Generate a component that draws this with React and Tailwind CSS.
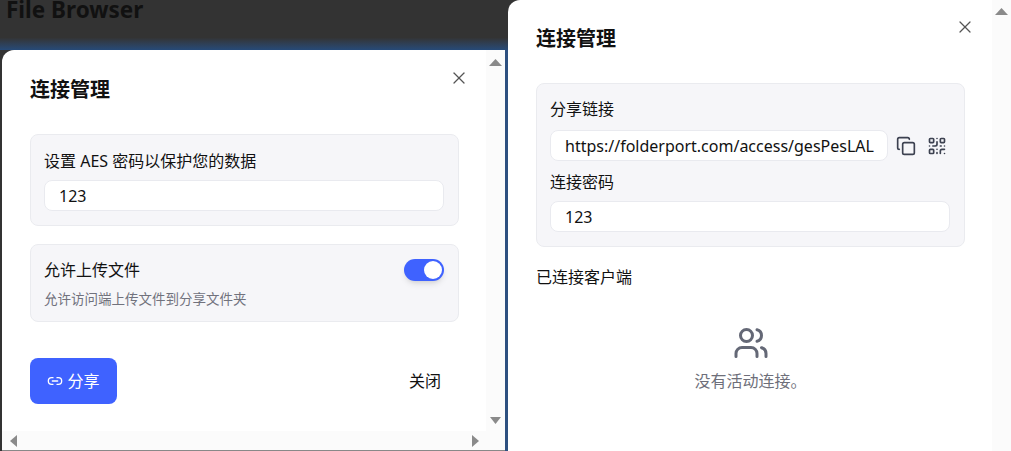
import { X, Link2, Copy, QrCode, Users } from "lucide-react";

const font = "font-['Noto_Sans','Noto_Sans_CJK_SC',sans-serif]";

function Field({ value, className = "" }) {
  return (
    <div className={`h-[31px] flex items-center px-[14px] bg-white border border-[#e9eaef] rounded-lg text-[16px] text-[#111] whitespace-nowrap ${className}`}>
      {value}
    </div>
  );
}

// triangles of the native scrollbar
function Arrow({ dir }) {
  const points = {
    up: "0,7 6.5,0 13,7",
    down: "1,0 6.5,7 12,0",
    left: "7,0 0,6 7,12",
    right: "0,0 7,6 0,12",
  };
  const size = dir === "up" || dir === "down" ? "w-[13px] h-[7px]" : "w-[7px] h-[12px]";
  return (
    <svg className={size} viewBox={dir === "up" || dir === "down" ? "0 0 13 7" : "0 0 7 12"} fill="#8a8a8a">
      <polygon points={points[dir]} />
    </svg>
  );
}

function ShareDialog() {
  return (
    <div className="h-[401px] ml-[2px] w-[503px] flex bg-white rounded-tl-xl overflow-hidden border-b border-[#888]">
      <div className="w-[484px] flex flex-col">
        <div className="flex-1 pl-[28px] pr-[27px] pt-[27px] relative">
          <X className="absolute right-[17px] top-[18px] text-[#555]" size={20} strokeWidth={1.5} />
          <h2 className="text-[20px] leading-[26px] font-bold text-[#111]">连接管理</h2>

          <div className="mt-[31px] h-[92px] bg-[#f6f6f9] border border-[#eaebef] rounded-lg pl-[13px] pr-[14px] pt-[14px]">
            <p className="text-[16px] leading-[24px] text-[#111]">设置 AES 密码以保护您的数据</p>
            <Field value="123" className="mt-[7px]" />
          </div>

          <div className="mt-[18px] h-[78px] bg-[#f6f6f9] border border-[#eaebef] rounded-lg pl-[13px] pr-[14px] pt-[13px]">
            <div className="flex items-center justify-between">
              <span className="text-[16px] leading-[24px] text-[#111]">允许上传文件</span>
              <span className="w-10 h-[22px] bg-[#3f62ff] rounded-full flex items-center justify-end pr-[2px] shadow-md">
                <span className="w-[18px] h-[18px] bg-white rounded-full" />
              </span>
            </div>
            <p className="mt-[7px] text-[13.5px] leading-[20px] text-[#71727d]">允许访问端上传文件到分享文件夹</p>
          </div>

          <div className="mt-[36px] flex items-center justify-between pr-[2px]">
            <button className="w-[87px] h-[46px] bg-[#3f62ff] rounded-lg text-white text-[16px] flex items-center justify-center gap-[4px]">
              <Link2 size={16} strokeWidth={2} />
              分享
            </button>
            <span className="w-[64px] text-center text-[16px] text-[#111]">关闭</span>
          </div>
        </div>
        <div className="h-[19px] bg-[#fbfbfb] flex items-center justify-between pl-[8px] pr-[7px]">
          <Arrow dir="left" />
          <Arrow dir="right" />
        </div>
      </div>
      <div className="w-[19px] bg-[#fbfbfb] flex flex-col items-center justify-between pt-[9px] pb-[26px]">
        <Arrow dir="up" />
        <Arrow dir="down" />
      </div>
    </div>
  );
}

function ConnectionPanel() {
  return (
    <div className="w-[503px] h-[451px] flex bg-white rounded-tl-xl overflow-hidden">
      <div className="w-[484px] pl-[28px] pr-[27px] pt-[26px] relative">
        <X className="absolute right-[17px] top-[17px] text-[#555]" size={20} strokeWidth={1.5} />
        <h2 className="text-[20px] leading-[26px] font-bold text-[#111]">连接管理</h2>

        <div className="mt-[31px] h-[164px] bg-[#f6f6f9] border border-[#eaebef] rounded-lg pl-[13px] pr-[14px] pt-[13px]">
          <p className="text-[16px] leading-[24px] text-[#111]">分享链接</p>
          <div className="mt-[9px] flex items-center">
            <Field value="https://folderport.com/access/gesPesLAL" className="w-[338px] shrink-0 overflow-hidden" />
            <Copy className="ml-[8px] text-[#3c4150]" size={20} strokeWidth={2} />
            <QrCode className="ml-[11px] text-[#3c4150]" size={20} strokeWidth={2} />
          </div>
          <p className="mt-[9px] text-[16px] leading-[24px] text-[#111]">连接密码</p>
          <Field value="123" className="mt-[7px]" />
        </div>

        <p className="mt-[18px] text-[16px] leading-[24px] text-[#111]">已连接客户端</p>

        <div className="mt-[36px] flex flex-col items-center">
          <Users size={36} strokeWidth={2} className="text-[#646876]" />
          <p className="mt-[8px] text-[16px] leading-[24px] text-[#6e6f7a]">没有活动连接。</p>
        </div>
      </div>
      <div className="w-[19px] bg-[#fbfbfb] flex flex-col items-center pt-[8px]">
        <Arrow dir="up" />
      </div>
    </div>
  );
}

export default function App() {
  return (
    <div className={`w-[1011px] h-[451px] flex overflow-hidden bg-[#333] ${font}`}>
      <div className="w-[508px] flex flex-col shrink-0">
        <div className="h-[50px] px-[6px] bg-gradient-to-b from-[#333] from-75% to-[#264a78]">
          <h1 className="text-[22.5px] leading-[20px] font-bold text-[#111]">File Browser</h1>
        </div>
        <div className="flex">
          <ShareDialog />
          <div className="w-[3px] bg-[#2d5080]" />
        </div>
      </div>
      <ConnectionPanel />
    </div>
  );
}
